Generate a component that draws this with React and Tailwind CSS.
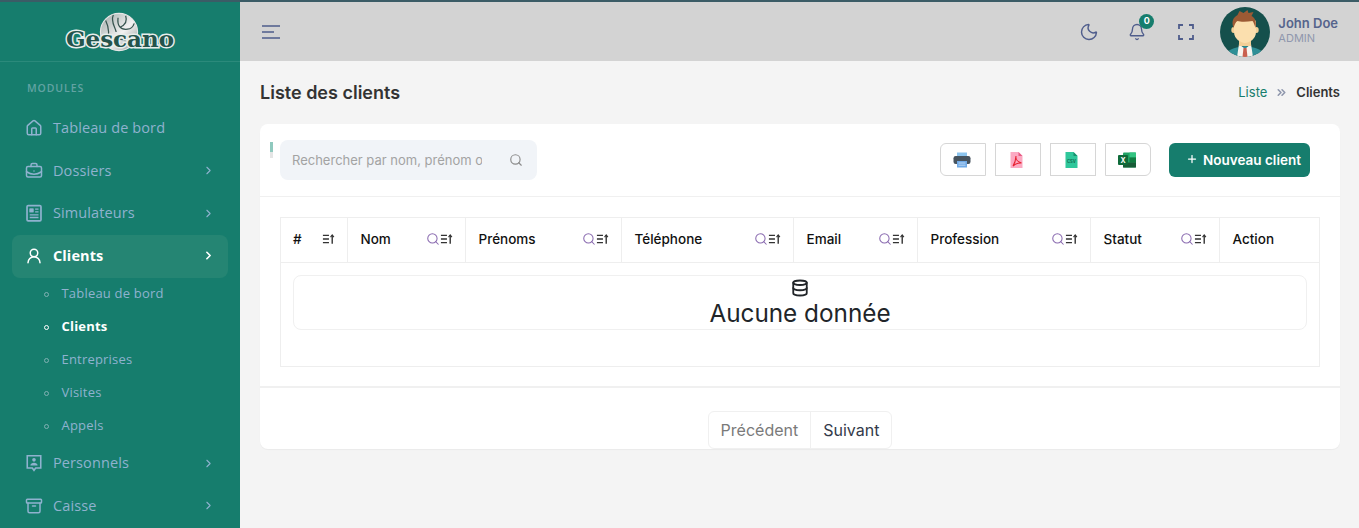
import React from "react";
import { House, BriefcaseBusiness, UserRound, Archive, ChevronRight, Moon, Bell, Search, Database, Plus, ChevronsRight } from "lucide-react";

const SIDE_FONT = "font-['Open_Sans',sans-serif]";

const SortIcon = () => (
  <svg width="13" height="14" viewBox="0 0 14 14" fill="none" stroke="#333" strokeWidth="1.4">
    <path d="M1 3h6.5M1 7h6.5M1 11h6.5" />
    <path d="M11 12V3" strokeWidth="1.5" />
    <path d="M9.2 5 11 2.6 12.8 5" strokeWidth="1.2" />
  </svg>
);

const NewsIcon = ({ className }) => (
  <svg className={className} viewBox="0 0 16 16" fill="none" stroke="currentColor" strokeWidth="1.5">
    <rect x="1.8" y="1.5" width="12.4" height="13.5" rx="1" />
    <rect x="4.2" y="4.2" width="3.2" height="3" fill="currentColor" strokeWidth="0.5" />
    <path d="M9 4.5h3M9 7h3M4.2 9.6h7.8M4.2 12h7.8" strokeWidth="1.2" />
  </svg>
);

const PersonCardIcon = ({ className }) => (
  <svg className={className} viewBox="0 0 16 16" fill="none" stroke="currentColor" strokeWidth="1.4">
    <path d="M2 1.5h12v11H9.5L8 14.5 6.5 12.5H2z" />
    <circle cx="8" cy="5.2" r="1.6" fill="currentColor" stroke="none" />
    <path d="M4.8 10.2c0-3.2 6.4-3.2 6.4 0z" fill="currentColor" stroke="none" />
  </svg>
);

const Logo = () => (
  <div className="relative w-[112px] h-[40px] flex items-center justify-center">
    <svg className="absolute left-[32px] top-0" width="46" height="40" viewBox="0 0 46 42" fill="none">
      <defs>
        <linearGradient id="ball" x1="0" y1="0" x2="1" y2="1">
          <stop offset="0" stopColor="#9aa5a3" />
          <stop offset="0.55" stopColor="#f2f2f2" />
          <stop offset="1" stopColor="#8b9492" />
        </linearGradient>
      </defs>
      <circle cx="23" cy="21" r="19.5" fill="url(#ball)" stroke="#e6e6e6" strokeWidth="1.2" />
      <path d="M9 9c4 8 4 16 1 25M17 3c-3 8 2 12 3 18M22 6c-1 8 2 13 10 12 4 0 6-3 7-6M30 30c-4-2-8-2-13 1M30 4c2 6-1 10-6 12" stroke="#36534e" strokeWidth="1.3" />
    </svg>
    <span className="relative mt-[12px] text-[23px] leading-none font-bold text-[#24544c] font-['DejaVu_Serif',serif] [-webkit-text-stroke:3px_#e8eeec] [paint-order:stroke_fill]">
      Gescano
    </span>
  </div>
);

const NavItem = ({ icon: Icon, label, chevron = true, active = false }) => (
  <div className={`mx-3 h-[42.5px] pb-[1px] rounded-lg px-[13px] flex items-center text-[14.5px] ${active ? "bg-[#258573] text-white font-bold" : "text-[#8fb2cf]"}`}>
    <Icon className="w-[18px] h-[18px] shrink-0 mr-[10px]" strokeWidth={2} />
    <span className="flex-1 tracking-[0.1px]">{label}</span>
    {chevron && <ChevronRight className="w-[13px] h-[13px]" strokeWidth={active ? 3 : 2} />}
  </div>
);

const SubItem = ({ label, active = false }) => (
  <div className={`h-[33px] pl-[44px] flex items-center text-[13px] tracking-[0.2px] ${active ? "text-white font-bold" : "text-[#8fb2cf]"}`}>
    <span className={`w-[5px] h-[5px] rounded-full border mr-[12.5px] ${active ? "border-white" : "border-[#7fb0b3]"}`} />
    {label}
  </div>
);

const Sidebar = () => (
  <aside className={`w-[240px] shrink-0 bg-[#167d6d] h-full overflow-hidden ${SIDE_FONT}`}>
    <div className="h-[60px] pt-[1px] flex items-center justify-center border-b border-[#2b8a7b]">
      <Logo />
    </div>
    <div className="h-[45.5px] pl-[27px] pt-[20px] text-[10.5px] leading-[13px] font-semibold tracking-[0.9px] text-[#62a3a3]">MODULES</div>
    <NavItem icon={House} label="Tableau de bord" chevron={false} />
    <NavItem icon={BriefcaseBusiness} label="Dossiers" />
    <NavItem icon={NewsIcon} label="Simulateurs" />
    <NavItem icon={UserRound} label="Clients" active />
    <SubItem label="Tableau de bord" />
    <SubItem label="Clients" active />
    <SubItem label="Entreprises" />
    <SubItem label="Visites" />
    <SubItem label="Appels" />
    <NavItem icon={PersonCardIcon} label="Personnels" />
    <NavItem icon={Archive} label="Caisse" />
  </aside>
);

const Avatar = () => (
  <svg width="50" height="50" viewBox="0 0 50 50">
    <defs>
      <clipPath id="av"><circle cx="25" cy="25" r="25" /></clipPath>
    </defs>
    <g clipPath="url(#av)">
      <rect width="50" height="50" fill="#15504c" />
      <path d="M5 50c1-7 7-9 20-11 13 2 19 4 20 11z" fill="#2f8f96" />
      <path d="M19 37l6 5 6-5 2 13H17z" fill="#f7f4ee" />
      <path d="M23.500 41h3l1 9h-5z" fill="#c9604e" />
      <rect x="19" y="30" width="12" height="9" fill="#f3cf97" />
      <ellipse cx="13.500" cy="23" rx="2.200" ry="3" fill="#f3cf97" />
      <ellipse cx="36.500" cy="23" rx="2.200" ry="3" fill="#f3cf97" />
      <path d="M14 15c0-5 22-5 22 0v10c0 7-7 11-11 11s-11-4-11-11z" fill="#fbdfae" />
      <path d="M13.500 21c-2-6-1-10 4-13l2-4 4 2 4-3 1 3 5-1-2 4c4 2 5 6 4 12-1-3-2-6-3-7-6 1-12 1-15 0-2 1-3 4-4 7z" fill="#9c5a34" />
    </g>
  </svg>
);

const Header = () => (
  <header className="h-[59px] shrink-0 bg-[#d3d3d3] flex items-center pl-[22px] pr-[21px] text-[#4f5d8c]">
    <svg width="18" height="16" viewBox="0 0 18 16" fill="none" stroke="#4f5d8c" strokeWidth="1.6">
      <path d="M0 2h18M0 8h12M0 14h18" />
    </svg>
    <div className="ml-auto flex items-center">
      <Moon className="w-[20px] h-[20px]" strokeWidth={1.7} />
      <div className="relative ml-[29px]">
        <Bell className="w-[18px] h-[18px]" strokeWidth={1.8} />
        <span className="absolute -top-[9px] left-[11px] w-[15px] h-[15px] rounded-full bg-[#167d6d] text-white text-[9px] font-bold flex items-center justify-center">0</span>
      </div>
      <svg className="ml-[32px]" width="16" height="16" viewBox="0 0 16 16" fill="none" stroke="#4f5d8c" strokeWidth="1.8">
        <path d="M1 5V1h4M11 1h4v4M15 11v4h-4M5 15H1v-4" />
      </svg>
      <div className="ml-[26px]"><Avatar /></div>
      <div className="ml-[8px] leading-none -mt-[3px]">
        <div className="text-[13px] font-semibold text-[#56648c]">John Doe</div>
        <div className="text-[11px] mt-[3px] text-[#8f97ad]">ADMIN</div>
      </div>
    </div>
  </header>
);

const ExportBtn = ({ children, rounded }) => (
  <button className={`w-[46px] h-[33px] pr-[3px] border border-[#d6d6d6] bg-white flex items-center justify-center ${rounded}`}>{children}</button>
);

const PrintIcon = () => (
  <svg width="18" height="16" viewBox="0 0 18 16">
    <rect x="4" y="0.5" width="10" height="4.5" fill="#8cc4ee" />
    <rect x="0.5" y="4" width="17" height="8" rx="2.2" fill="#47535e" />
    <rect x="4" y="9" width="10" height="6.5" fill="#6fa9e6" />
    <path d="M5.5 11h7M5.5 13.2h7" stroke="#dcecfb" strokeWidth="0.7" />
  </svg>
);

const PdfIcon = () => (
  <svg width="13" height="16" viewBox="0 0 13 16" fill="none">
    <path d="M0.5 0h8l4 4v12H0.5z" fill="#fba9c2" />
    <path d="M8.5 0v4h4z" fill="#e75c84" />
    <path d="M6 4c-.6 3 1.6 6 5.5 7-3-.2-6 .6-8.5 3C4.6 11.500 5.800 8 6 4z" stroke="#e8202f" strokeWidth="1.1" />
  </svg>
);

const CsvIcon = () => (
  <svg width="13" height="16" viewBox="0 0 13 16">
    <path d="M0.500 0h8l4 4v12H0.500z" fill="#2fc79b" />
    <path d="M8.500 0v4h4z" fill="#17906e" />
    <text x="6.500" y="10.500" textAnchor="middle" fontSize="4.200" fontWeight="700" fill="#0f6b52" fontFamily="Inter, sans-serif">CSV</text>
  </svg>
);

const ExcelIcon = () => (
  <svg width="18" height="16" viewBox="0 0 18 16">
    <rect x="5" y="0.500" width="13" height="15" rx="1" fill="#21a366" />
    <rect x="11.500" y="0.500" width="6.500" height="5" fill="#33c481" />
    <rect x="5" y="5.500" width="6.500" height="5" fill="#21a366" />
    <rect x="11.500" y="5.500" width="6.500" height="5" fill="#107c41" />
    <rect x="5" y="10.500" width="13" height="5" fill="#185c37" />
    <rect x="0" y="3" width="10" height="10" rx="1" fill="#0f6b3a" />
    <text x="5" y="10.500" textAnchor="middle" fontSize="7" fontWeight="700" fill="#fff" fontFamily="Inter, sans-serif">X</text>
  </svg>
);

const columns = [
  { label: "#", search: false },
  { label: "Nom", search: true },
  { label: "Prénoms", search: true },
  { label: "Téléphone", search: true },
  { label: "Email", search: true },
  { label: "Profession", search: true },
  { label: "Statut", search: true },
  { label: "Action", plain: true },
];

const ClientsTable = () => (
  <div className="border border-[#eeeeee]">
    <div className="grid grid-cols-[66px_118px_156px_172px_124px_173px_129px_1fr] h-[45px] border-b border-[#eeeeee]">
      {columns.map((col, i) => (
        <div key={col.label} className={`flex items-center pb-[2px] pr-[12px] text-[13.5px] font-medium text-[#111] ${i > 0 ? "pl-[12.5px] border-l border-[#eeeeee]" : "pl-[12px]"}`}>
          <span className="flex-1">{col.label}</span>
          {col.search && <Search className="w-[14px] h-[14px] text-[#8a6bb0]" strokeWidth={1.8} />}
          {!col.plain && <SortIcon />}
        </div>
      ))}
    </div>
    <div className="h-[103px] px-[12px] pt-[12px]">
      <div className="h-[55px] rounded-lg border border-[#f0f0f0] flex flex-col items-center pt-[3px] text-[#212529]">
        <Database className="w-[18px] h-[18px]" strokeWidth={2.4} />
        <div className="text-[24.3px] leading-[29px] mt-[2px]">Aucune donnée</div>
      </div>
    </div>
  </div>
);

export default function App() {
  return (
    <div className="h-[528px] w-full overflow-hidden flex flex-col bg-[#f4f4f4] font-['Inter',sans-serif]">
      <div className="h-[2px] shrink-0 bg-[#3b5c66]" />
      <div className="flex flex-1 min-h-0">
        <Sidebar />
        <main className="flex-1 min-w-0 flex flex-col">
          <Header />
          <div className="pl-[20px] pr-[19px]">
            <div className="h-[63px] flex items-center justify-between">
              <h1 className="text-[18px] font-semibold text-[#333]">Liste des clients</h1>
              <div className="flex items-center text-[13px]">
                <span className="text-[#167d6d]">Liste</span>
                <ChevronsRight className="w-[13px] h-[13px] mx-[8px] text-[#8f97ad]" strokeWidth={3} />
                <span className="font-semibold text-[#333]">Clients</span>
              </div>
            </div>
            <section className="bg-white rounded-lg shadow-[0_1px_1px_rgba(0,0,0,0.04)]">
              <div className="h-[73px] border-b border-[#f0f0f0] flex items-start pt-[16px] pl-[10px] pr-[30px]">
                <div className="w-[3px] h-[16px] mt-[2px] mr-[7px] bg-[#e5e5e5]">
                  <div className="h-[10px] bg-[#8fc9be]" />
                </div>
                <div className="w-[257px] h-[40px] rounded-lg bg-[#f1f4f8] flex items-center pl-[12px] pr-[14px]">
                  <input
                    className="flex-1 min-w-0 pt-[1px] bg-transparent outline-none text-[13px] mr-[27px] placeholder:text-[#a3a3a3]"
                    placeholder="Rechercher par nom, prénom ou téléphone"
                  />
                  <Search className="w-[14px] h-[14px] text-[#8c8c8c] shrink-0" strokeWidth={2} />
                </div>
                <div className="ml-auto flex items-center gap-[9px] mt-[3px]">
                  <ExportBtn rounded="rounded-l-md"><PrintIcon /></ExportBtn>
                  <ExportBtn rounded=""><PdfIcon /></ExportBtn>
                  <ExportBtn rounded=""><CsvIcon /></ExportBtn>
                  <ExportBtn rounded="rounded-r-md"><ExcelIcon /></ExportBtn>
                </div>
                <button className="ml-[18px] mt-[3px] w-[141px] h-[34px] pl-[8px] rounded-md bg-[#167d6d] text-white text-[13.5px] font-semibold flex items-center justify-center">
                  <Plus className="w-[12px] h-[12px] mr-[5px] -mt-[3px]" strokeWidth={2.5} />
                  Nouveau client
                </button>
              </div>
              <div className="h-[191px] px-[20px] pt-[20px] border-b-2 border-[#f0f0f0]">
                <ClientsTable />
              </div>
              <div className="h-[61px] flex items-start justify-center pt-[23px]">
                <div className="flex h-[38px] rounded-md border border-[#f0f0f0] text-[16px]">
                  <span className="px-[12px] flex items-center text-[#7a7a7a] border-r border-[#f0f0f0]">Précédent</span>
                  <span className="px-[12px] flex items-center text-[#333b4a]">Suivant</span>
                </div>
              </div>
            </section>
          </div>
        </main>
      </div>
    </div>
  );
}
